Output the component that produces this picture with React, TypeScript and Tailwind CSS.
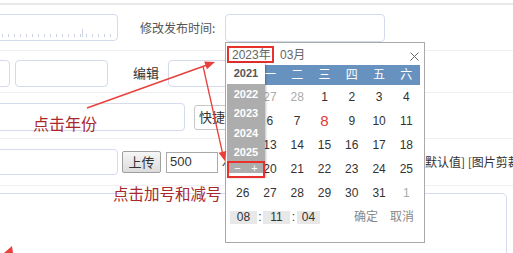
const cjk = "font-['Noto_Sans_CJK_SC',sans-serif]";

const weekDays = ["日", "一", "二", "三", "四", "五", "六"];

const dateRows: { d: number; muted?: boolean; today?: boolean }[][] = [
  [{ d: 26, muted: true }, { d: 27, muted: true }, { d: 28, muted: true }, { d: 1 }, { d: 2 }, { d: 3 }, { d: 4 }],
  [{ d: 5 }, { d: 6 }, { d: 7 }, { d: 8, today: true }, { d: 9 }, { d: 10 }, { d: 11 }],
  [{ d: 12 }, { d: 13 }, { d: 14 }, { d: 15 }, { d: 16 }, { d: 17 }, { d: 18 }],
  [{ d: 19 }, { d: 20 }, { d: 21 }, { d: 22 }, { d: 23 }, { d: 24 }, { d: 25 }],
  [{ d: 26 }, { d: 27 }, { d: 28 }, { d: 29 }, { d: 30 }, { d: 31 }, { d: 1, muted: true }],
];

function Field({ className = "" }: { className?: string }) {
  return <div className={`shrink-0 rounded-[4px] border border-[#d5dbec] bg-white ${className}`} />;
}

function DatePicker() {
  return (
    <div className="absolute left-[225px] top-[42px] h-[201px] w-[200px] border border-[#a9a9a9] bg-white font-['Liberation_Sans','Noto_Sans_CJK_SC',sans-serif] text-[12px] text-[#333]">
      <div className="flex h-[22px] items-start pt-[3px]">
        <span className="ml-[1px] flex h-[17px] w-[47px] items-center border-2 border-[#e8312d] pl-[3px] leading-none text-[#666]">
          2023年
        </span>
        <span className="ml-[6px] mt-[3px] leading-none text-[#666]">03月</span>
        <svg className="ml-auto mr-[5px] mt-[6px]" width="9" height="9" viewBox="0 0 9 9">
          <path d="M0.5 0.5L8.5 8.5M8.5 0.5L0.5 8.5" stroke="#666" strokeWidth="1" />
        </svg>
      </div>

      <div className="ml-[3px] grid h-[20px] w-[191px] grid-cols-7 items-center bg-[#6792c0] text-center text-white">
        {weekDays.map((w) => (
          <span key={w}>{w}</span>
        ))}
      </div>

      <div className="ml-[3px] w-[191px]">
        {dateRows.map((row, i) => (
          <div key={i} className="grid h-[24px] grid-cols-7 items-center text-center">
            {row.map((c, j) => (
              <span
                key={j}
                className={
                  c.today
                    ? "text-[15px] text-[#e23a3a]"
                    : c.muted
                      ? "text-[#aaa]"
                      : "text-[#333]"
                }
              >
                {c.d}
              </span>
            ))}
          </div>
        ))}
      </div>

      <div className="flex h-[24px] items-center pl-[4px] text-[12px]">
        <span className="flex h-[13px] w-[27px] items-center justify-center bg-[#e8e8e8]">08</span>
        <span className="w-[6px] text-center">:</span>
        <span className="flex h-[13px] w-[27px] items-center justify-center bg-[#e8e8e8]">11</span>
        <span className="w-[7px] text-center">:</span>
        <span className="flex h-[13px] w-[23px] items-center justify-center bg-[#e8e8e8]">04</span>
        <span className="ml-[34px] text-[#888]">确定</span>
        <span className="ml-[12px] text-[#888]">取消</span>
      </div>

      {/* year dropdown */}
      <div className="absolute left-[1px] top-[20px] w-[38px] font-['Liberation_Sans',sans-serif] text-[11px] font-bold shadow-[1px_0_2px_rgba(0,0,0,0.25)]">
        <div className="flex h-[21px] items-center justify-center bg-white text-[#555]">2021</div>
        {[2022, 2023, 2024, 2025].map((y) => (
          <div key={y} className="flex h-[19.5px] items-center justify-center bg-[#adadad] text-white">
            {y}
          </div>
        ))}
        <div className="-mt-[1px] h-[17px] border-2 border-[#e8312d] bg-white">
          <div className="flex h-[10px] items-center justify-around bg-[#adadad] text-[11px] font-normal leading-none text-white">
            <span>−</span>
            <span>+</span>
          </div>
        </div>
      </div>
    </div>
  );
}

export default function App() {
  return (
    <div className={`relative h-[253px] w-[513px] overflow-hidden bg-white ${cjk} text-[12px] text-[#333]`}>
      <div className="h-[3px]" />

      {/* row 1 */}
      <div className="flex h-[47px] items-center border-t-2 border-[#e9e9e9]">
        <div className="relative -ml-[13px] h-[27px] w-[131px] shrink-0 rounded-[4px] border border-[#d5dbec]">
          <div className="absolute bottom-[3px] left-[14px] right-[6px] h-[3px] bg-[repeating-linear-gradient(90deg,#cdd3e3_0_1px,transparent_1px_6px)]" />
          <div className="absolute bottom-[3px] left-[94px] h-[8px] w-px bg-[#cdd3e3]" />
        </div>
        <span className="ml-[22px] w-[85px] shrink-0 text-[#555]">修改发布时间:</span>
        <Field className="h-[28px] w-[160px]" />
      </div>

      {/* row 2 */}
      <div className="flex h-[42px] items-center border-t border-[#efefef] pt-[3px]">
        <Field className="-ml-[13px] h-[27px] w-[23px]" />
        <Field className="ml-[5px] h-[27px] w-[93px]" />
        <span className="ml-[25px] w-[35px] shrink-0 text-[13px] text-[#333]">编辑</span>
        <Field className="h-[27px] w-[100px]" />
      </div>

      {/* row 3 */}
      <div className="flex h-[46px] items-center border-t border-[#efefef] pt-[3px]">
        <Field className="-ml-[13px] h-[28px] w-[198px]" />
        <button className="ml-[9px] h-[25px] shrink-0 whitespace-nowrap rounded-[3px] border border-[#c8c8c8] bg-white pl-[4px] pr-[4px] text-[13px] text-[#333]">
          快捷选择
        </button>
      </div>

      {/* row 4 */}
      <div className="flex h-[47px] items-center border-t border-[#efefef]">
        <Field className="-ml-[13px] h-[26px] w-[131px]" />
        <button className="ml-[4px] h-[22px] w-[39px] shrink-0 rounded-[2px] border border-[#a0a0a0] bg-gradient-to-b from-[#f6f6f6] to-[#dcdcdc] text-[13px] text-[#333]">
          上传
        </button>
        <div className="ml-[5px] flex h-[21px] w-[52px] shrink-0 items-center border border-[#aaa] pl-[3px] font-['Liberation_Sans',sans-serif] text-[13px]">
          500
        </div>
        <span className="ml-[4px] w-[175px] shrink-0 font-['Liberation_Sans',sans-serif] text-[12px]">X</span>
        <span className="shrink-0 whitespace-nowrap text-[12px]">[恢复默认值] [图片剪裁]</span>
      </div>

      {/* row 5 */}
      <div className="h-[68px] border-t border-[#efefef] pt-[7px]">
        <Field className="-ml-[13px] h-[100px] w-[520px] rounded-[5px]" />
      </div>

      <DatePicker />

      {/* annotations */}
      <span className="absolute left-[33px] top-[112px] text-[16px] leading-[22px] text-[#a8282c]">点击年份</span>
      <span className="absolute left-[113px] top-[182px] text-[15.5px] leading-[22px] text-[#a8282c]">点击加号和减号</span>

      <svg className="pointer-events-none absolute left-0 top-0" width="513" height="253" viewBox="0 0 513 253">
        <line x1="87" y1="108" x2="207" y2="65" stroke="#e8413c" strokeWidth="1.5" />
        <polygon points="215,62 206.9,69.2 204.2,61.6" fill="#e8413c" />
        <line x1="203" y1="66" x2="222.5" y2="153" stroke="#e8413c" strokeWidth="1.3" />
        <polygon points="225,161 226.3,151 218.5,152.8" fill="#e8413c" />
        <polygon points="12,246 4,253 13,253" fill="#e8413c" />
      </svg>
    </div>
  );
}
